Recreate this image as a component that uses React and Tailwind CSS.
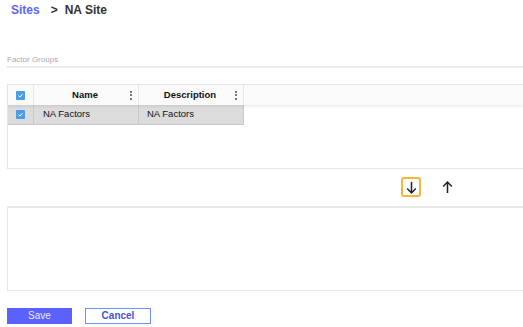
import React from "react";

const Check = ({ className = "" }) => (
  <span className={`flex items-center justify-center w-[9px] h-[9px] rounded-[1px] bg-[#4a9de6] ${className}`}>
    <svg width="7" height="7" viewBox="0 0 10 10">
      <path d="M2 5.2 L4.2 7.2 L8 3" fill="none" stroke="#ffffff" strokeWidth="1.4" />
    </svg>
  </span>
);

const Kebab = () => (
  <span className="flex flex-col gap-[1.5px]">
    <span className="w-[2px] h-[2px] bg-[#777]" />
    <span className="w-[2px] h-[2px] bg-[#777]" />
    <span className="w-[2px] h-[2px] bg-[#777]" />
  </span>
);

const App = () => {
  return (
    <div className="w-[523px] h-[327px] overflow-hidden bg-white font-['Liberation_Sans',Arial,sans-serif]">
      {/* breadcrumb */}
      <div className="flex items-center h-[20px] pl-[11px] text-[12px] font-bold">
        <span className="text-[#5b66f5]">Sites</span>
        <span className="ml-[11px] text-[#333]">&gt;</span>
        <span className="ml-[7px] text-[#333]">NA Site</span>
      </div>

      <div className="pl-[7px]">
        <div className="mt-[35px] text-[8px] text-[#a9a9a9] leading-[10px]">Factor Groups</div>
        <div className="mt-[1px] h-[2px] bg-[#ececec]" />

        {/* grid */}
        <div className="mt-[16px] h-[85px] border-l border-b border-t border-[#e6e6e6] flex flex-col">
          <div className="flex h-[20px] bg-[#fafafa] shadow-[0_2px_2px_rgba(0,0,0,0.06)] text-[9.5px] font-bold text-[#111] relative z-10">
            <div className="w-[26px] flex items-center justify-center border-r border-[#e6e6e6]">
              <Check className="ml-[-1px]" />
            </div>
            <div className="w-[105px] flex items-center border-r border-[#e6e6e6] relative">
              <span className="flex-1 text-center pr-[2px]">Name</span>
              <span className="absolute right-[6px]"><Kebab /></span>
            </div>
            <div className="w-[105px] flex items-center border-r border-[#e6e6e6] relative">
              <span className="flex-1 text-center pr-[2px]">Description</span>
              <span className="absolute right-[6px]"><Kebab /></span>
            </div>
            <div className="flex-1" />
          </div>
          <div className="flex h-[20px] w-[236px] bg-[#dcdcdc] border-b border-[#c9c9c9] text-[9.5px] text-[#111]">
            <div className="w-[26px] flex items-center justify-center border-r border-[#c9c9c9]">
              <Check className="ml-[-1px]" />
            </div>
            <div className="w-[105px] flex items-center pl-[9px] border-r border-[#c9c9c9]">NA Factors</div>
            <div className="w-[105px] flex items-center pl-[8px] border-r border-[#c9c9c9]">NA Factors</div>
          </div>
          <div className="flex-1" />
        </div>

        {/* move buttons */}
        <div className="mt-[8px] flex items-center h-[20px]">
          <div className="ml-[394px] w-[20px] h-[20px] rounded-[3px] border-2 border-[#f7b53b] flex items-center justify-center">
            <svg width="13" height="13" viewBox="0 0 12 12">
              <path d="M6 1 V11 M2 7 L6 11 L10 7" fill="none" stroke="#222" strokeWidth="1.4" />
            </svg>
          </div>
          <div className="ml-[19px] w-[14px] h-[14px] flex items-center justify-center">
            <svg width="13" height="13" viewBox="0 0 12 12">
              <path d="M6 11 V1 M2 5 L6 1 L10 5" fill="none" stroke="#222" strokeWidth="1.4" />
            </svg>
          </div>
        </div>

        {/* second grid */}
        <div className="mt-[9px] h-[85px] border-t-2 border-l border-b border-[#e9e9e9]" />

        {/* actions */}
        <div className="mt-[17px] flex items-center gap-[13px] text-[10px]">
          <button className="w-[65px] h-[16px] bg-[#5a62fb] text-[#e9eaff] leading-none">Save</button>
          <button className="w-[66px] h-[16px] border border-[#6e93ff] bg-white text-[#4b4fd0] font-bold leading-none">Cancel</button>
        </div>
      </div>
    </div>
  );
};

export default App;
